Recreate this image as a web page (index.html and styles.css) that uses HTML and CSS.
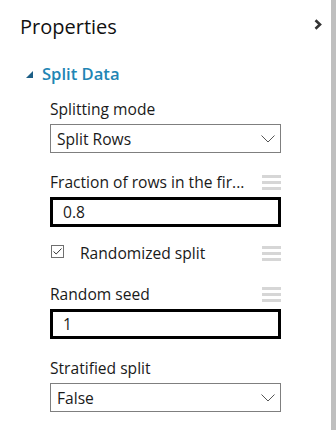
FILE: index.html
```html
<!DOCTYPE html>
<html lang="en">
  <head>
    <meta charset="UTF-8" />
    <meta name="viewport" content="width=device-width, initial-scale=1.0" />
    <title>Properties</title>
    <link rel="stylesheet" href="styles.css">
  </head>
  <body>
    <div class="pane">
      <div class="panel">
        <div class="panel-header">
          <h2>Properties</h2>
          <button type="button" class="collapse-btn" title="Collapse">
            <svg width="8" height="11" viewBox="0 0 8 11">
              <path d="M1.5 1.2 L6 5.5 L1.5 9.8" fill="none" stroke="#333" stroke-width="2.6" />
            </svg>
          </button>
        </div>

        <div class="section-title">
          <span class="triangle"></span>
          <span>Split Data</span>
        </div>

        <div class="fields">
          <div class="field">
            <div class="field-label">
              <label for="mode">Splitting mode</label>
            </div>
            <div class="select">
              <span>Split Rows</span>
              <svg width="14" height="8" viewBox="0 0 14 8">
                <path d="M0.5 0.5 L7 7 L13.5 0.5" fill="none" stroke="#555" stroke-width="1" />
              </svg>
            </div>
          </div>

          <div class="field">
            <div class="field-label">
              <label for="fraction" title="Fraction of rows in the first output dataset">Fraction of rows in the fir...</label>
              <span class="handle"><i></i><i></i><i></i></span>
            </div>
            <input type="text" id="fraction" class="text-input" value="0.8" />
          </div>

          <div class="check-row">
            <div class="check-label">
              <span class="checkbox">
                <svg width="11" height="11" viewBox="0 0 11 11">
                  <path d="M1.5 5.5 L4.2 8 L9.5 2.5" fill="none" stroke="#333" stroke-width="1" />
                </svg>
              </span>
              <span>Randomized split</span>
            </div>
            <span class="handle"><i></i><i></i><i></i></span>
          </div>

          <div class="field">
            <div class="field-label">
              <label for="seed">Random seed</label>
              <span class="handle"><i></i><i></i><i></i></span>
            </div>
            <input type="text" id="seed" class="text-input" value="1" />
          </div>

          <div class="field">
            <div class="field-label">
              <label for="stratified">Stratified split</label>
            </div>
            <div class="select">
              <span>False</span>
              <svg width="14" height="8" viewBox="0 0 14 8">
                <path d="M0.5 0.5 L7 7 L13.5 0.5" fill="none" stroke="#555" stroke-width="1" />
              </svg>
            </div>
          </div>
        </div>
      </div>
      <div class="scrollbar"></div>
    </div>
  </body>
</html>
```

FILE: styles.css
```css
:root {
  --text-color: #1a1a1a;
  --accent-color: #2185b4;
  --border-color: #7f7f7f;
  --handle-color: #d6d6d6;
}

* {
  box-sizing: border-box;
  margin: 0;
  padding: 0;
}

body {
  font-family: "Open Sans", "Noto Sans", sans-serif;
  color: var(--text-color);
  background: #ffffff;
}

.pane {
  display: flex;
  height: 430px;
}

.panel {
  flex: 1;
  padding: 12px 9px 0 20px;
}

.scrollbar {
  width: 5px;
  background-color: #bfbfbf;
}

.panel-header {
  display: flex;
  justify-content: space-between;
  align-items: flex-start;
  height: 30px;
}

.panel-header h2 {
  font-size: 20px;
  font-weight: 400;
  line-height: 30px;
  color: #111;
}

.collapse-btn {
  background: none;
  border: none;
  margin-top: 6px;
  cursor: pointer;
}

.section-title {
  display: flex;
  align-items: center;
  gap: 9px;
  margin: 19px 0 0 6px;
  height: 24px;
  font-size: 16.6px;
  font-weight: 600;
  color: var(--accent-color);
}

.triangle {
  width: 0;
  height: 0;
  border-left: 7px solid transparent;
  border-bottom: 7px solid #1d5f86;
  margin-top: 3px;
}

.fields {
  margin: 14px 41px 0 30px;
  font-size: 15.6px;
}

.field + .field,
.check-row + .field {
  margin-top: 19px;
}

.field + .check-row {
  margin-top: 14px;
}

.field-label {
  display: flex;
  justify-content: space-between;
  align-items: center;
  height: 20px;
  line-height: 20px;
  margin-bottom: 5px;
}

.field-label label {
  white-space: nowrap;
}

.handle {
  display: flex;
  flex-direction: column;
  gap: 3px;
  width: 19px;
}

.handle i {
  display: block;
  height: 3px;
  background-color: var(--handle-color);
}

.select {
  display: flex;
  justify-content: space-between;
  align-items: center;
  height: 29px;
  padding: 0 5px 0 6px;
  border: 1px solid var(--border-color);
  background: #ffffff;
}

.text-input {
  display: block;
  width: 100%;
  height: 30px;
  padding: 0 10px;
  border: 3px solid #000000;
  font-family: inherit;
  font-size: 15.6px;
  color: var(--text-color);
  outline: none;
}

.check-row {
  display: flex;
  justify-content: space-between;
  align-items: center;
  height: 24px;
}

.check-label {
  display: flex;
  align-items: center;
  gap: 16px;
}

.checkbox {
  display: flex;
  width: 13px;
  height: 13px;
  border: 1px solid #6f6f6f;
  margin-left: 1px;
  margin-top: -3px;
}
```
